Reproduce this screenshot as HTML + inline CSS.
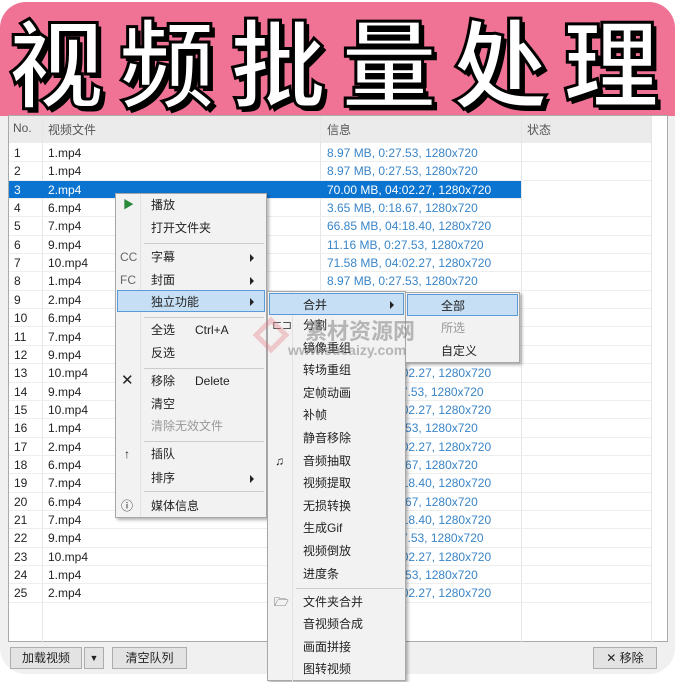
<!DOCTYPE html>
<html><head><meta charset="utf-8"><style>
*{margin:0;padding:0;box-sizing:border-box}
body{width:675px;height:674px;overflow:hidden;background:#fff;position:relative;font-family:"Liberation Sans","Noto Sans CJK SC",sans-serif;font-size:12px;color:#222}
.frame{position:absolute;left:0;top:2px;width:675px;height:672px;background:#f0f0f0;border-radius:26px;overflow:hidden}
.banner{position:absolute;left:0;top:0;width:675px;height:114px;background:#f07395}
.title{position:absolute;left:8px;top:2px;font-family:"Noto Sans CJK SC",sans-serif;font-weight:700;font-size:96px;line-height:110px;letter-spacing:15px;color:#fff;-webkit-text-stroke:3px #000;text-shadow:4px 4px 0 #000;white-space:nowrap}
.table{position:absolute;left:8px;top:113px;width:660px;height:527px;background:#fff;border:1px solid #aaa}
.hdr{position:absolute;left:0;top:0;width:642px;height:27px;background:#ebebeb}
.vl{position:absolute;top:0;width:1px;height:527px;background:#e6e6e6}
.row{position:absolute;left:0;width:642px;height:18.35px;border-bottom:1px solid #eee;line-height:18px}
.row span{position:absolute;top:0}
.c1{left:5px}.c2{left:39px}.c3{left:318px;color:#3a85c8}
.sel{background:#0a74d0;color:#fff;width:512px}
.sel .c3{color:#fff}
.menu{position:absolute;background:#f2f2f2;border:1px solid #a8a8a8;box-shadow:2px 2px 3px rgba(0,0,0,.3)}
.mi{position:absolute;left:0;height:22px;line-height:22px;font-size:12px;color:#222}
.hl{background:#c6dff5;border:1px solid #5a9ad8}
.sep{position:absolute;height:1px;background:#ccc}
.arr{position:absolute;width:0;height:0;border-left:4px solid #222;border-top:4px solid transparent;border-bottom:4px solid transparent}
.btn{position:absolute;top:647px;height:22px;background:#e3e3e3;border:1px solid #adadad;line-height:20px;text-align:center;font-size:12px}
</style></head><body>
<div class="frame">
<div class="banner"></div>
<div class="table">
<div class="hdr"></div>
<div class="vl" style="left:33px"></div><div class="vl" style="left:311px"></div><div class="vl" style="left:512px"></div><div class="vl" style="left:642px"></div>
<div style="position:absolute;top:5px;left:4px;color:#555">No.</div>
<div style="position:absolute;top:5px;left:39px;color:#555">视频文件</div>
<div style="position:absolute;top:5px;left:318px;color:#555">信息</div>
<div style="position:absolute;top:5px;left:518px;color:#555">状态</div>
<div id="rows"></div>
</div>
<div class="title">视频批量处理</div>
</div>
<div class="btn" style="left:10px;width:72px">加载视频</div>
<div class="btn" style="left:84px;width:20px;font-size:9px">▼</div>
<div class="btn" style="left:112px;width:75px">清空队列</div>
<div class="btn" style="left:593px;width:64px">✕ 移除</div>

<div class="menu" style="left:115px;top:193px;width:152px;height:325px">
<div style="position:absolute;left:24px;top:0;width:1px;height:323px;background:#e2e2e2"></div>
<div class="mi" style="top:0;left:7px;color:#2a8a3a;font-size:11px">▶</div>
<div class="mi" style="top:0;left:35px">播放</div>
<div class="mi" style="top:23px;left:35px">打开文件夹</div>
<div class="sep" style="top:49px;left:28px;width:120px"></div>
<div class="mi" style="top:52px;left:4px;color:#666">CC</div><div class="mi" style="top:52px;left:35px">字幕</div><div class="arr" style="left:134px;top:60px"></div>
<div class="mi" style="top:75px;left:4px;color:#666">FC</div><div class="mi" style="top:75px;left:35px">封面</div><div class="arr" style="left:134px;top:83px"></div>
<div class="mi hl" style="top:96px;left:1px;width:148px;padding-left:33px">独立功能</div><div class="arr" style="left:134px;top:104px"></div>
<div class="sep" style="top:123px;left:28px;width:120px"></div>
<div class="mi" style="top:125px;left:35px">全选 &nbsp;&nbsp;&nbsp;&nbsp;&nbsp;Ctrl+A</div>
<div class="mi" style="top:148px;left:35px">反选</div>
<div class="sep" style="top:174px;left:28px;width:120px"></div>
<div class="mi" style="top:176px;left:5px;font-size:15px">✕</div>
<div class="mi" style="top:176px;left:35px">移除 &nbsp;&nbsp;&nbsp;&nbsp;&nbsp;Delete</div>
<div class="mi" style="top:199px;left:35px">清空</div>
<div class="mi" style="top:221px;left:35px;color:#999">清除无效文件</div>
<div class="sep" style="top:247px;left:28px;width:120px"></div>
<div class="mi" style="top:249px;left:8px">↑</div><div class="mi" style="top:249px;left:35px">插队</div>
<div class="mi" style="top:273px;left:35px">排序</div><div class="arr" style="left:134px;top:281px"></div>
<div class="sep" style="top:297px;left:28px;width:120px"></div>
<div class="mi" style="top:301px;left:5px">ⓘ</div><div class="mi" style="top:301px;left:35px">媒体信息</div>
</div>

<div class="menu" style="left:267px;top:291px;width:139px;height:390px">
<div style="position:absolute;left:24px;top:0;width:1px;height:390px;background:#e2e2e2"></div>
<div class="mi hl" style="top:1px;left:1px;width:135px;padding-left:33px">合并</div><div class="arr" style="left:122px;top:9px"></div>
<div class="mi" style="top:22px;left:4px;color:#555">⊏⊐</div>
<div class="mi" style="top:22px;left:35px">分割</div>
<div class="mi" style="top:45px;left:35px">镜像重组</div>
<div class="mi" style="top:67px;left:35px">转场重组</div>
<div class="mi" style="top:90px;left:35px">定帧动画</div>
<div class="mi" style="top:112px;left:35px">补帧</div>
<div class="mi" style="top:135px;left:35px">静音移除</div>
<div class="mi" style="top:158px;left:7px">♫</div><div class="mi" style="top:158px;left:35px">音频抽取</div>
<div class="mi" style="top:180px;left:35px">视频提取</div>
<div class="mi" style="top:203px;left:35px">无损转换</div>
<div class="mi" style="top:225px;left:35px">生成Gif</div>
<div class="mi" style="top:248px;left:35px">视频倒放</div>
<div class="mi" style="top:271px;left:35px">进度条</div>
<div class="sep" style="top:296px;left:28px;width:108px"></div>
<div class="mi" style="top:299px;left:6px">🗁</div><div class="mi" style="top:299px;left:35px">文件夹合并</div>
<div class="mi" style="top:321px;left:35px">音视频合成</div>
<div class="mi" style="top:344px;left:35px">画面拼接</div>
<div class="mi" style="top:366px;left:35px">图转视频</div>
</div>

<div class="menu" style="left:405px;top:292px;width:115px;height:71px">
<div class="mi hl" style="top:1px;left:1px;width:111px;padding-left:33px">全部</div>
<div class="mi" style="top:24px;left:35px;color:#999">所选</div>
<div class="mi" style="top:47px;left:35px">自定义</div>
</div>

<div style="position:absolute;left:258px;top:322px;width:26px;height:26px;transform:rotate(45deg);border:5px solid rgba(230,120,130,.35)"></div>
<div style="position:absolute;left:305px;top:314px;font-size:22px;font-weight:bold;color:rgba(120,120,120,.5);font-family:'Noto Sans CJK SC',sans-serif">素材资源网</div>
<div style="position:absolute;left:288px;top:342px;font-size:14px;font-weight:bold;color:rgba(120,120,120,.5)">www.sucaizy.com</div>

<script>
var d=[["1","1.mp4","8.97 MB, 0:27.53, 1280x720"],["2","1.mp4","8.97 MB, 0:27.53, 1280x720"],["3","2.mp4","70.00 MB, 04:02.27, 1280x720"],["4","6.mp4","3.65 MB, 0:18.67, 1280x720"],["5","7.mp4","66.85 MB, 04:18.40, 1280x720"],["6","9.mp4","11.16 MB, 0:27.53, 1280x720"],["7","10.mp4","71.58 MB, 04:02.27, 1280x720"],["8","1.mp4","8.97 MB, 0:27.53, 1280x720"],["9","2.mp4",""],["10","6.mp4",""],["11","7.mp4",""],["12","9.mp4",""],["13","10.mp4","70.00 MB, 04:02.27, 1280x720"],["14","9.mp4","11.16 MB, 0:27.53, 1280x720"],["15","10.mp4","70.00 MB, 04:02.27, 1280x720"],["16","1.mp4","8.97 MB, 0:27.53, 1280x720"],["17","2.mp4","70.00 MB, 04:02.27, 1280x720"],["18","6.mp4","3.65 MB, 0:18.67, 1280x720"],["19","7.mp4","66.85 MB, 04:18.40, 1280x720"],["20","6.mp4","3.65 MB, 0:18.67, 1280x720"],["21","7.mp4","66.85 MB, 04:18.40, 1280x720"],["22","9.mp4","11.16 MB, 0:27.53, 1280x720"],["23","10.mp4","70.00 MB, 04:02.27, 1280x720"],["24","1.mp4","8.97 MB, 0:27.53, 1280x720"],["25","2.mp4","70.00 MB, 04:02.27, 1280x720"]];
var h="";d.forEach(function(r,i){h+='<div class="row'+(i==2?' sel':'')+'" style="top:'+(28+i*18.35)+'px"><span class="c1">'+r[0]+'</span><span class="c2">'+r[1]+'</span><span class="c3">'+r[2]+'</span></div>'});
document.getElementById("rows").innerHTML=h;
</script>
</body></html>
